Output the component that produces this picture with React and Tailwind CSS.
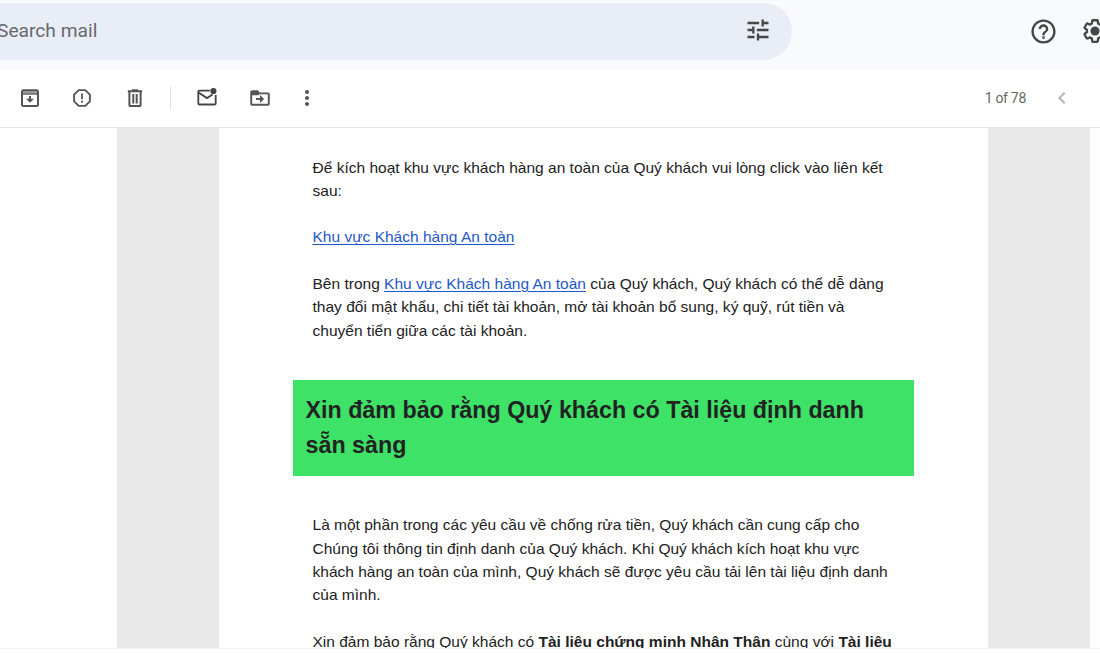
import { MdTune, MdHelpOutline, MdMoreVert, MdChevronLeft } from "react-icons/md";

const GEAR =
  "M13.85 22.25h-3.7c-.74 0-1.36-.54-1.45-1.27l-.27-1.89c-.27-.14-.53-.29-.79-.46l-1.8.72c-.7.26-1.47-.03-1.81-.65L2.2 15.53c-.35-.66-.2-1.44.36-1.88l1.53-1.19c-.01-.15-.02-.3-.02-.46 0-.15.01-.31.02-.46l-1.52-1.19c-.59-.45-.74-1.26-.37-1.88l1.85-3.19c.34-.62 1.11-.9 1.79-.63l1.81.73c.26-.17.52-.32.78-.46l.27-1.91c.09-.7.71-1.25 1.44-1.25h3.7c.74 0 1.36.54 1.45 1.27l.27 1.89c.27.14.53.29.79.46l1.8-.72c.71-.26 1.48.03 1.82.65l1.84 3.18c.36.66.2 1.44-.36 1.88l-1.52 1.19c.01.15.02.3.02.46s-.01.31-.02.46l1.52 1.19c.56.45.72 1.23.37 1.86l-1.86 3.22c-.34.62-1.11.9-1.8.63l-1.8-.72c-.26.17-.52.32-.78.46l-.27 1.91c-.1.68-.72 1.22-1.46 1.22zm-3.23-2h2.76l.37-2.55.53-.22c.44-.18.88-.44 1.34-.78l.45-.34 2.38.96 1.38-2.4-2.03-1.58.07-.56c.03-.26.06-.51.06-.78s-.03-.53-.06-.78l-.07-.56 2.03-1.58-1.39-2.4-2.39.96-.45-.35c-.42-.32-.87-.58-1.33-.77l-.52-.22-.37-2.55h-2.76l-.37 2.55-.53.21c-.44.19-.88.44-1.34.79l-.45.33-2.38-.95-1.39 2.39 2.03 1.58-.07.56a7 7 0 0 0-.06.79c0 .26.02.53.06.78l.07.56-2.03 1.58 1.38 2.4 2.39-.96.45.35c.43.33.86.58 1.33.77l.53.22.38 2.55z";

function Icon({ children, className = "size-6" }) {
  return (
    <svg viewBox="0 0 24 24" fill="none" className={"shrink-0 " + className}>
      {children}
    </svg>
  );
}

function Archive() {
  return (
    <Icon>
      <rect x="4" y="4.3" width="16" height="15.8" rx="1.4" stroke="currentColor" strokeWidth="2" />
      <path d="M5 5.2h14v2.2H5z" fill="currentColor" opacity=".6" />
      <path d="M4 8h16" stroke="currentColor" strokeWidth="1.4" />
      <path d="M12 10v5" stroke="currentColor" strokeWidth="2" />
      <path d="M8 12.8 12 16.8 16 12.8z" fill="currentColor" />
    </Icon>
  );
}

function Spam() {
  return (
    <Icon>
      <path d="M8.7 4.1h6.6l4.6 4.6v6.6l-4.6 4.6H8.7l-4.6-4.6V8.7z" stroke="currentColor" strokeWidth="1.9" strokeLinejoin="round" />
      <path d="M12 7.4v5.8M12 14.8v1.9" stroke="currentColor" strokeWidth="1.8" />
    </Icon>
  );
}

function Trash() {
  return (
    <Icon>
      <path d="M4.8 5.3h14.4M9 4.2h6" stroke="currentColor" strokeWidth="2" />
      <path d="M6.4 5.5V19.2q0 .9.9.9h9.4q.9 0 .9-.9V5.5" stroke="currentColor" strokeWidth="2" />
      <path d="M10.3 8v9.4M13.7 8v9.4" stroke="currentColor" strokeWidth="2" />
    </Icon>
  );
}

function Unread() {
  return (
    <Icon>
      <path d="M14.8 4.7H4.2q-.9 0-.9.9v12q0 .9.9.9h15.6q.9 0 .9-.9V9" stroke="currentColor" strokeWidth="1.8" />
      <path d="M3.4 6.5 12 12.1l5.6-3.6" stroke="currentColor" strokeWidth="1.8" />
      <circle cx="18.4" cy="5" r="3.1" fill="currentColor" />
    </Icon>
  );
}

function MoveTo() {
  return (
    <Icon>
      <path d="M3.2 8V6q0-.9.9-.9h5.2L11.4 7.4h8.5q.9 0 .9.9v9.5q0 .9-.9.9H4.1q-.9 0-.9-.9z" stroke="currentColor" strokeWidth="1.9" />
      <path d="M3.2 5h6.2l2 2.4-.8 1.8H3.2z" fill="currentColor" />
      <path d="M8 13h5" stroke="currentColor" strokeWidth="2" />
      <path d="M12 9 16.2 13 12 17z" fill="currentColor" />
    </Icon>
  );
}

function Link() {
  return (
    <a className="text-[#1f58c7] underline decoration-1 underline-offset-2">Khu vực Khách hàng An toàn</a>
  );
}

export default function App() {
  return (
    <div className="flex h-[660px] w-[1100px] flex-col overflow-hidden bg-white font-['Liberation_Sans',sans-serif]">
      <header className="flex h-[69px] shrink-0 items-start bg-[#f9fafe] pt-[3px] text-[#444746]">
        <div className="flex h-[57px] w-[792px] shrink-0 items-center justify-between rounded-r-full bg-[#e9edf6] pr-5">
          <span className="-ml-[3px] font-['Roboto',sans-serif] text-[19.2px] text-[#67696c]">Search mail</span>
          <MdTune className="mb-[3px] size-[28px] text-[#444746]" />
        </div>
        <MdHelpOutline className="mt-[14px] ml-[236.5px] size-[29px] shrink-0" />
        <Icon className="mt-[14px] ml-[23.5px] size-[28px]">
          <path d={GEAR} fill="currentColor" />
          <circle cx="12" cy="12" r="3.9" fill="currentColor" />
        </Icon>
      </header>

      <div className="flex h-[58.5px] shrink-0 items-center border-b border-[#e4e4e4] pt-px pl-[18px] text-[#555]">
        <Archive />
        <div className="ml-7 flex"><Spam /></div>
        <div className="ml-[29px] flex"><Trash /></div>
        <div className="ml-[23px] h-6 w-px bg-[#e4e4e4]" />
        <div className="ml-6 flex text-[#444]"><Unread /></div>
        <div className="ml-[28.5px] flex"><MoveTo /></div>
        <MdMoreVert className="ml-[23.5px] size-6" />
        <span className="ml-auto font-['Roboto',sans-serif] text-sm tracking-[-0.3px] text-[#666]">1 of 78</span>
        <MdChevronLeft className="mr-[26px] ml-6 size-6 text-[#b5b5b5]" />
      </div>

      <main className="flex h-[521px] shrink-0 overflow-hidden border-b border-[#f2f2f2]">
        <div className="w-[117px] shrink-0" />
        <div className="w-[101.5px] shrink-0 bg-[#e9e9e9]" />
        <article className="flex w-[769.5px] shrink-0 flex-col gap-[23.3px] pt-[28px] pl-[94px] text-[15.53px] leading-[23.3px] whitespace-nowrap text-[#222]">
          <p>
            Để kích hoạt khu vực khách hàng an toàn của Quý khách vui lòng click vào liên kết
            <br />
            sau:
          </p>
          <p><Link /></p>
          <p>
            Bên trong <Link /> của Quý khách, Quý khách có thể dễ dàng
            <br />
            thay đổi mật khẩu, chi tiết tài khoản, mở tài khoản bổ sung, ký quỹ, rút tiền và
            <br />
            chuyển tiển giữa các tài khoản.
          </p>
          <h2 className="mt-[14.8px] mb-[14.2px] -ml-5 h-24 w-[621.5px] bg-[#3ee267] p-[13px] text-[23.27px] leading-[34.9px] font-bold text-[#222]">
            Xin đảm bảo rằng Quý khách có Tài liệu định danh
            <br />
            sẵn sàng
          </h2>
          <p>
            Là một phần trong các yêu cầu về chống rửa tiền, Quý khách cần cung cấp cho
            <br />
            Chúng tôi thông tin định danh của Quý khách. Khi Quý khách kích hoạt khu vực
            <br />
            khách hàng an toàn của mình, Quý khách sẽ được yêu cầu tải lên tài liệu định danh
            <br />
            của mình.
          </p>
          <p>
            Xin đảm bảo rằng Quý khách có <b>Tài liệu chứng minh Nhân Thân</b> cùng với <b>Tài liệu</b>
          </p>
        </article>
        <div className="w-[101.5px] shrink-0 bg-[#e9e9e9]" />
        <div className="grow bg-[#fdfdfd]" />
      </main>
    </div>
  );
}
